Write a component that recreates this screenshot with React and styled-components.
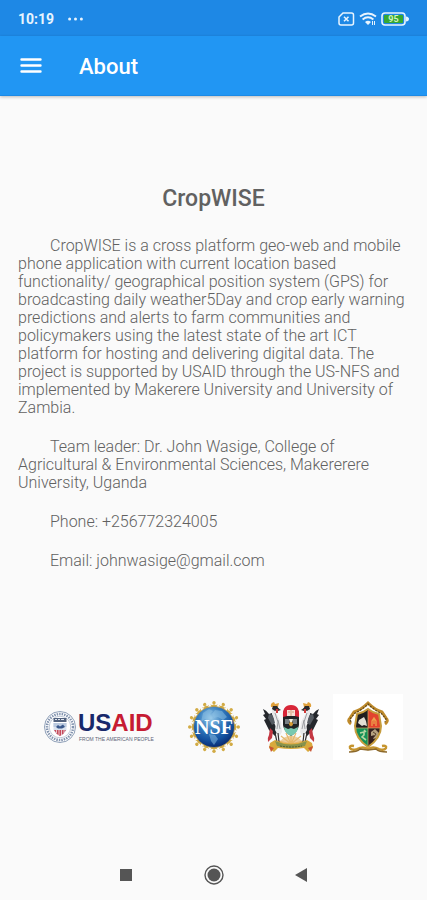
import styled, { createGlobalStyle } from 'styled-components';

const GlobalStyle = createGlobalStyle`
  * {
    box-sizing: border-box;
    margin: 0;
    padding: 0;
  }

  body {
    background: #fafafa;
    color: #616161;
    font-family: Roboto, sans-serif;
  }
`;

const Screen = styled.div`
  min-height: 100vh;
  display: flex;
  flex-direction: column;
`;

const StatusBar = styled.div`
  height: 36px;
  padding: 2px 18px 0;
  display: flex;
  align-items: center;
  justify-content: space-between;
  background: #1e88e5;
  color: #e8f4fe;
`;

const StatusGroup = styled.div`
  display: flex;
  align-items: center;
  gap: ${(props) => props.$gap}px;
`;

const Time = styled.span`
  font-size: 14px;
  font-weight: 700;
`;

const AppBar = styled.header`
  height: 60px;
  padding: 2px 18px 0;
  display: flex;
  align-items: center;
  gap: 35px;
  background: #2196f3;
  color: #fff;
  border-bottom: 1px solid #1c8ae6;
  box-shadow: 0 1px 3px rgba(0, 0, 0, 0.25);
`;

const IconButton = styled.button`
  display: flex;
  border: none;
  background: none;
  color: inherit;
  cursor: pointer;
`;

const PageTitle = styled.h1`
  font-size: 22px;
  font-weight: 500;
  line-height: 28px;
`;

const Main = styled.main`
  flex: 1;
  padding: 88px 18px 0;
`;

const AppName = styled.h2`
  font-size: 23px;
  font-weight: 500;
  line-height: 30px;
  text-align: center;
  margin-bottom: 23px;
`;

const Paragraph = styled.p`
  font-size: 16px;
  font-weight: 300;
  line-height: 18px;
  text-indent: 32px;
  margin-bottom: 21px;
`;

const Logos = styled.div`
  margin-top: 124px;
  padding: 0 6px 0 10px;
  display: flex;
  align-items: center;
  gap: 7px;
`;

const LogoCell = styled.div`
  display: flex;
  justify-content: center;
  flex: ${(props) => (props.$wide ? '1' : '0 0 70px')};
  padding: 5px 0;
  background: ${(props) => (props.$filled ? '#fff' : 'transparent')};
`;

const NavBar = styled.nav`
  height: 50px;
  display: flex;
  align-items: center;
  justify-content: center;
  gap: 64px;
  color: #555;
`;

function NoSimIcon() {
  return (
    <svg width="17" height="14" viewBox="0 0 17 14" fill="none" stroke="currentColor">
      <path d="M5 1h8.5Q15.500 1 15.500 3v8q0 2-2 2H3q-2 0-2-2V5z" strokeWidth="1.500" />
      <path d="M6 4.700l4.500 4.600M10.500 4.700L6 9.300" strokeWidth="1.500" />
    </svg>
  );
}

function WifiIcon() {
  return (
    <svg width="18" height="14" viewBox="0 0 18 14" fill="none" stroke="currentColor">
      <path d="M1 4.600Q9-1.600 17 4.600" strokeWidth="1.900" />
      <path d="M3.600 7.400Q9 3.200 14.400 7.400" strokeWidth="1.900" />
      <path d="M6 10Q9 7.600 12 10L9 13z" fill="currentColor" stroke="none" />
      <path d="M13.500 9v4M15.500 9v4" strokeWidth="1" />
    </svg>
  );
}

function BatteryIcon() {
  return (
    <svg width="28" height="14" viewBox="0 0 28 14">
      <rect x="1" y="1" width="23" height="12" rx="3" fill="none" stroke="#e8f4fe" strokeWidth="1.600" />
      <path d="M25 4.500q3 .5 3 2.500t-3 2.500z" fill="#e8f4fe" />
      <rect x="3" y="3" width="19" height="8" rx="1" fill="#35a832" />
      <text x="12.500" y="10" textAnchor="middle" fontSize="9" fontWeight="700" fill="#d3f3bd">
        95
      </text>
    </svg>
  );
}

function UsaidLogo() {
  return (
    <svg width="114" height="34" viewBox="0 0 114 34">
      <circle cx="17" cy="17" r="15.500" fill="#fff" stroke="#8fa0b8" strokeWidth="1" />
      <circle cx="17" cy="17" r="13" fill="none" stroke="#8293ae" strokeWidth="2.500" strokeDasharray="1.500 1" />
      <circle cx="17" cy="17" r="10.800" fill="#fff" stroke="#a5b2c6" strokeWidth=".7" />
      <path d="M10.500 8h13v4h-13z" fill="#52627e" />
      <path d="M12 9.500h2m1 0h2m1 0h3" stroke="#dce3ee" />
      <path d="M10.500 13h13v7q-2 4-6.500 6-4.500-2-6.500-6z" fill="#dbe3ef" />
      <path d="M10.500 13h13v4h-13z" fill="#bccbe0" />
      <path d="M13 17l2-2 2 1.500 3-2 2 2.500-3 1.500h-4z" fill="#3a598c" />
      <path d="M11 20h12q-2 4-6 6-4-2-6-6z" fill="#c54b5c" />
      <path d="M13.500 20v3M16 20v5M18.500 20v5M21 20v3" stroke="#f6e5e8" strokeWidth=".8" />
      <text x="35" y="21" fontFamily="Liberation Sans, sans-serif" fontSize="24" fontWeight="700" fill="#18286b">
        US<tspan fill="#c61c33">AID</tspan>
      </text>
      <text x="36" y="31" fontFamily="Liberation Sans, sans-serif" fontSize="5" fill="#5d6478">
        FROM THE AMERICAN PEOPLE
      </text>
    </svg>
  );
}

function NsfLogo() {
  const rays = Array.from({ length: 16 }, (_, i) => i * 22.5);

  return (
    <svg width="54" height="54" viewBox="0 0 54 54">
      <defs>
        <radialGradient id="globe" cx=".42" cy=".28" r=".72">
          <stop offset="0" stopColor="#9dcdeb" />
          <stop offset=".4" stopColor="#387fc0" />
          <stop offset=".75" stopColor="#1452a0" />
          <stop offset="1" stopColor="#092b72" />
        </radialGradient>
      </defs>
      {rays.map((angle) => (
        <g key={angle} transform={`rotate(${angle} 27 27)`} fill="#d2ab45">
          <path d="M24 7l2-2.500h2L30 7l-1 3h-4z" />
          <circle cx="27" cy="2.700" r="1.700" />
          <path d="M23 4.500l4 1 4-1-3 3h-2z" />
        </g>
      ))}
      <circle cx="27" cy="27" r="20.500" fill="url(#globe)" stroke="#b99a4b" strokeWidth=".8" />
      <path
        d="M16 13l6-4 4 2-3 3 2 3-4 4-3-2-4 3zM28 10l7 1 5 6-4 3-5-3-4 1-2-4zM22 34l6 1 3 4-4 6-3-4z"
        fill="#8fc3e5"
        opacity=".5"
      />
      <text x="27" y="34" textAnchor="middle" fontFamily="Liberation Serif, serif" fontSize="20" fontWeight="700" fill="#fff">
        NSF
      </text>
    </svg>
  );
}

function Crane() {
  return (
    <g>
      <path d="M1 7q3 1 6 5l3-1 2 10 4 7-3 6-6-6L2 18l2-1-3-4 2-1z" fill="#24272c" />
      <path d="M7 12l4 1 2 8-3 2-4-7z" fill="#555b62" />
      <path d="M10 5q5-2 6 2l-2 4 5 9 1 10-3 5-4-7 1-8-4-8z" fill="#e8e9ea" />
      <path d="M13 11l3 9-1 7M16 18l2 9" fill="none" stroke="#8b8e93" strokeWidth=".8" />
      <path d="M9 5q-1-4 3-5l1 2 4-1-1 4z" fill="#e0a13c" />
      <path d="M11 4h4l2 3-4 2-3-2z" fill="#2b2a2c" />
      <path d="M14 7h2v4h-2z" fill="#cf3938" />
      <path d="M16 6l3 2-3 1z" fill="#363638" />
      <path d="M8 26l3 3-1 7-4 4q-1-4 1-7z" fill="#c43742" />
      <path d="M16 31l1 9M13 31l2 9M12 40h6" fill="none" stroke="#343030" strokeWidth="1.200" />
    </g>
  );
}

function MakerereLogo() {
  return (
    <svg width="58" height="50" viewBox="0 0 58 50">
      <g stroke="#e5b769" strokeWidth="1.200">
        <path d="M29 42l-12-3M29 42l-10-8M29 42l-5-11M29 42V29M29 42l5-11M29 42l10-8M29 42l12-3" />
      </g>
      <path d="M17 40q12-13 24 0l-3 2H20z" fill="#e5b66b" opacity=".65" />
      <Crane />
      <g transform="translate(58 0) scale(-1 1)">
        <Crane />
      </g>
      <path d="M21 13q0-9 8-9t8 9v10q-1 7-8 11-7-4-8-11z" fill="#202426" />
      <path d="M21 15q-1-12 8-12t8 12q-8-3-16 0z" fill="#d82638" />
      <path d="M25 8h8v6h-8z" fill="#f5dfd7" />
      <path d="M29 8v6M26 10h2M30 10h2" stroke="#c3804f" strokeWidth=".7" />
      <path d="M23 17h4v5h-4zM31 17h4v5h-4z" fill="#777f83" />
      <path d="M27 17h4l-2 8z" fill="#f1f0df" />
      <circle cx="29" cy="22" r="2" fill="#d69c35" />
      <path d="M22 25l4 2 3-1 3 1 4-2q0 6-7 9-7-3-7-9z" fill="#79c9b0" />
      <path d="M8 41l5-3q16 7 32 0l5 3 1 5-5 4-4-4q-13 2-26 0l-4 4-5-4z" fill="#d9a93c" />
      <path d="M13 39q16 7 32 0l-2 5q-14 4-28 0z" fill="#87934d" />
      <path d="M7 44l5 2-3 4zM51 44l-5 2 3 4z" fill="#c95432" />
      <path d="M18 44q11 2 22 0" fill="none" stroke="#555e30" strokeDasharray="2 1" />
    </svg>
  );
}

function ZambiaLogo() {
  return (
    <svg width="42" height="56" viewBox="0 0 42 56">
      <defs>
        <clipPath id="shield">
          <path d="M21 10Q26 14 32 15l2 12Q34 39 21 48 8 39 8 27l2-12q6-1 11-5z" />
        </clipPath>
      </defs>
      <path d="M4 25q-4-3-1-6l4-6Q14 11 21 4q7 7 14 9l4 6q3 3-1 6" fill="none" stroke="#bf8b2c" strokeWidth="3" />
      <path d="M4 23l-1-3 5-6Q15 11 21 5q6 6 13 9l5 6-1 3" fill="none" stroke="#5e471f" strokeWidth="1.200" strokeDasharray="2 1.300" />
      <g clipPath="url(#shield)">
        <path d="M7 9h14v20H7z" fill="#201e20" />
        <path d="M21 9h14v20H21z" fill="#e3432e" />
        <path d="M7 29h14v20H7z" fill="#169257" />
        <path d="M21 29h14v20H21z" fill="#35211f" />
      </g>
      <path d="M12 21l5-3 2 4 1 5-3-1-2 1-4-3z" fill="#e1ded5" />
      <path d="M25 27v-5l2-3 2 3v5M27 20v5" fill="none" stroke="#eda14c" strokeWidth="1.300" />
      <path d="M13 34l4-1v3l-2 2 4 3M17 31l2 2" fill="none" stroke="#b6d8a3" strokeWidth="1.600" />
      <path d="M24 33l4-3 4 4-2 5-4 1 2-4-4 1z" fill="#b5a080" />
      <path d="M26 33l3 2-2 3" fill="none" stroke="#58412c" />
      <path d="M21 10Q26 14 32 15l2 12Q34 39 21 48 8 39 8 27l2-12q6-1 11-5z" fill="none" stroke="#c69c3c" strokeWidth="2" />
      <path d="M21 12v34M9 29h24" stroke="#d7b36b" strokeWidth=".7" />
      <path d="M7 47q-5-1-4 2 2 3 7 1 6-3 11 0 5-3 11 0 5 2 7-1 1-3-4-2" fill="none" stroke="#c6952f" strokeWidth="2.400" />
      <path d="M2 53q8 0 11-3l8 1 8-1q3 3 11 3" fill="none" stroke="#8d692b" strokeWidth="1.500" />
    </svg>
  );
}

function App() {
  return (
    <>
      <GlobalStyle />
      <Screen>
        <StatusBar>
          <StatusGroup $gap={14}>
            <Time>10:19</Time>
            <svg width="15" height="4" viewBox="0 0 15 4" fill="currentColor">
              <circle cx="1.600" cy="2" r="1.500" />
              <circle cx="7.500" cy="2" r="1.500" />
              <circle cx="13.400" cy="2" r="1.500" />
            </svg>
          </StatusGroup>
          <StatusGroup $gap={4}>
            <NoSimIcon />
            <WifiIcon />
            <BatteryIcon />
          </StatusGroup>
        </StatusBar>

        <AppBar>
          <IconButton aria-label="Open menu">
            <svg width="26" height="26" viewBox="0 0 26 26" stroke="currentColor" strokeWidth="2.400" strokeLinecap="round">
              <path d="M3.500 5.500h19M3.500 11.500h19M3.500 17.500h19" />
            </svg>
          </IconButton>
          <PageTitle>About</PageTitle>
        </AppBar>

        <Main>
          <AppName>CropWISE</AppName>
          <Paragraph>
            CropWISE is a cross platform geo-web and mobile phone application
            with current location based functionality/ geographical position
            system (GPS) for broadcasting daily weather5Day and crop early
            warning predictions and alerts to farm communities and policymakers
            using the latest state of the art ICT platform for hosting and
            delivering digital data. The project is supported by USAID through
            the US-NFS and implemented by Makerere University and University of
            Zambia.
          </Paragraph>
          <Paragraph>
            Team leader: Dr. John Wasige, College of Agricultural &amp;
            Environmental Sciences, Makererere University, Uganda
          </Paragraph>
          <Paragraph>Phone: +256772324005</Paragraph>
          <Paragraph>Email: johnwasige@gmail.com</Paragraph>

          <Logos>
            <LogoCell $wide>
              <UsaidLogo />
            </LogoCell>
            <LogoCell>
              <NsfLogo />
            </LogoCell>
            <LogoCell>
              <MakerereLogo />
            </LogoCell>
            <LogoCell $filled>
              <ZambiaLogo />
            </LogoCell>
          </Logos>
        </Main>

        <NavBar>
          <IconButton aria-label="Recent apps">
            <svg width="24" height="24" viewBox="0 0 24 24" fill="currentColor">
              <path d="M6 6h12v12H6z" />
            </svg>
          </IconButton>
          <IconButton aria-label="Home">
            <svg width="24" height="24" viewBox="0 0 24 24" fill="currentColor">
              <circle cx="12" cy="12" r="9" fill="none" stroke="currentColor" strokeWidth="1.400" />
              <circle cx="12" cy="12" r="6.500" />
            </svg>
          </IconButton>
          <IconButton aria-label="Back">
            <svg width="24" height="24" viewBox="0 0 24 24" fill="currentColor">
              <path d="M5 12l12-7v14z" />
            </svg>
          </IconButton>
        </NavBar>
      </Screen>
    </>
  );
}

export default App;
